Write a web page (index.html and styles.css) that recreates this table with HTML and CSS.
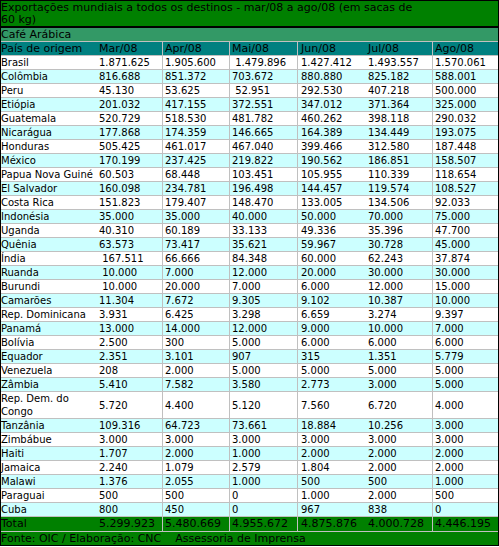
FILE: index.html
```html
<!DOCTYPE html>
<html lang="pt">
<head>
    <meta charset="UTF-8">
    <title>Exportações mundiais - Café Arábica</title>
    <link rel="stylesheet" href="styles.css">
</head>
<body>
    <table class="grid">
        <colgroup>
            <col class="c-pais">
            <col class="c-mar">
            <col class="c-apr">
            <col class="c-mai">
            <col class="c-jun">
            <col class="c-jul">
            <col class="c-ago">
        </colgroup>
        <tr class="title">
            <td colspan="7"><div class="title-text">Exportações mundiais a todos os destinos - mar/08 a ago/08 (em sacas de 60 kg)</div></td>
        </tr>
        <tr class="section">
            <td colspan="7">Café Arábica</td>
        </tr>
        <tr class="head">
            <td>País de origem</td><td>Mar/08</td><td>Apr/08</td><td>Mai/08</td><td>Jun/08</td><td>Jul/08</td><td>Ago/08</td>
        </tr>
        <tr><td>Brasil</td><td>1.871.625</td><td>1.905.600</td><td>&nbsp;1.479.896</td><td>1.427.412</td><td>1.493.557</td><td>1.570.061</td></tr>
        <tr class="alt"><td>Colômbia</td><td>816.688</td><td>851.372</td><td>703.672</td><td>880.880</td><td>825.182</td><td>588.001</td></tr>
        <tr><td>Peru</td><td>45.130</td><td>53.625</td><td>&nbsp;52.951</td><td>292.530</td><td>407.218</td><td>500.000</td></tr>
        <tr class="alt"><td>Etiópia</td><td>201.032</td><td>417.155</td><td>372.551</td><td>347.012</td><td>371.364</td><td>325.000</td></tr>
        <tr><td>Guatemala</td><td>520.729</td><td>518.530</td><td>481.782</td><td>460.262</td><td>398.118</td><td>290.032</td></tr>
        <tr class="alt"><td>Nicarágua</td><td>177.868</td><td>174.359</td><td>146.665</td><td>164.389</td><td>134.449</td><td>193.075</td></tr>
        <tr><td>Honduras</td><td>505.425</td><td>461.017</td><td>467.040</td><td>399.466</td><td>312.580</td><td>187.448</td></tr>
        <tr class="alt"><td>México</td><td>170.199</td><td>237.425</td><td>219.822</td><td>190.562</td><td>186.851</td><td>158.507</td></tr>
        <tr><td>Papua Nova Guiné</td><td>60.503</td><td>68.448</td><td>103.451</td><td>105.955</td><td>110.339</td><td>118.654</td></tr>
        <tr class="alt"><td>El Salvador</td><td>160.098</td><td>234.781</td><td>196.498</td><td>144.457</td><td>119.574</td><td>108.527</td></tr>
        <tr><td>Costa Rica</td><td>151.823</td><td>179.407</td><td>148.470</td><td>133.005</td><td>134.506</td><td>92.033</td></tr>
        <tr class="alt"><td>Indonésia</td><td>35.000</td><td>35.000</td><td>40.000</td><td>50.000</td><td>70.000</td><td>75.000</td></tr>
        <tr><td>Uganda</td><td>40.310</td><td>60.189</td><td>33.133</td><td>49.336</td><td>35.396</td><td>47.700</td></tr>
        <tr class="alt"><td>Quênia</td><td>63.573</td><td>73.417</td><td>35.621</td><td>59.967</td><td>30.728</td><td>45.000</td></tr>
        <tr><td>Índia</td><td>&nbsp;167.511</td><td>66.666</td><td>84.348</td><td>60.000</td><td>62.243</td><td>37.874</td></tr>
        <tr class="alt"><td>Ruanda</td><td>&nbsp;10.000</td><td>7.000</td><td>12.000</td><td>20.000</td><td>30.000</td><td>30.000</td></tr>
        <tr><td>Burundi</td><td>&nbsp;10.000</td><td>20.000</td><td>7.000</td><td>6.000</td><td>12.000</td><td>15.000</td></tr>
        <tr class="alt"><td>Camarões</td><td>11.304</td><td>7.672</td><td>9.305</td><td>9.102</td><td>10.387</td><td>10.000</td></tr>
        <tr><td>Rep. Dominicana</td><td>3.931</td><td>6.425</td><td>3.298</td><td>6.659</td><td>3.274</td><td>9.397</td></tr>
        <tr class="alt"><td>Panamá</td><td>13.000</td><td>14.000</td><td>12.000</td><td>9.000</td><td>10.000</td><td>7.000</td></tr>
        <tr><td>Bolívia</td><td>2.500</td><td>300</td><td>5.000</td><td>6.000</td><td>6.000</td><td>6.000</td></tr>
        <tr class="alt"><td>Equador</td><td>2.351</td><td>3.101</td><td>907</td><td>315</td><td>1.351</td><td>5.779</td></tr>
        <tr><td>Venezuela</td><td>208</td><td>2.000</td><td>5.000</td><td>5.000</td><td>5.000</td><td>5.000</td></tr>
        <tr class="alt"><td>Zâmbia</td><td>5.410</td><td>7.582</td><td>3.580</td><td>2.773</td><td>3.000</td><td>5.000</td></tr>
        <tr class="tall"><td>Rep. Dem. do<br>Congo</td><td>5.720</td><td>4.400</td><td>5.120</td><td>7.560</td><td>6.720</td><td>4.000</td></tr>
        <tr class="alt"><td>Tanzânia</td><td>109.316</td><td>64.723</td><td>73.661</td><td>18.884</td><td>10.256</td><td>3.000</td></tr>
        <tr><td>Zimbábue</td><td>3.000</td><td>3.000</td><td>3.000</td><td>3.000</td><td>3.000</td><td>3.000</td></tr>
        <tr class="alt"><td>Haiti</td><td>1.707</td><td>2.000</td><td>1.000</td><td>2.000</td><td>2.000</td><td>2.000</td></tr>
        <tr><td>Jamaica</td><td>2.240</td><td>1.079</td><td>2.579</td><td>1.804</td><td>2.000</td><td>2.000</td></tr>
        <tr class="alt"><td>Malawi</td><td>1.376</td><td>2.055</td><td>1.000</td><td>500</td><td>500</td><td>1.000</td></tr>
        <tr><td>Paraguai</td><td>500</td><td>500</td><td>0</td><td>1.000</td><td>2.000</td><td>500</td></tr>
        <tr class="alt"><td>Cuba</td><td>800</td><td>450</td><td>0</td><td>967</td><td>838</td><td>0</td></tr>
        <tr class="total">
            <td>Total</td><td>5.299.923</td><td>5.480.669</td><td>4.955.672</td><td>4.875.876</td><td>4.000.728</td><td>4.446.195</td>
        </tr>
        <tr class="source">
            <td colspan="7">Fonte: OIC / Elaboração: CNC &nbsp;&nbsp; Assessoria de Imprensa</td>
        </tr>
    </table>
</body>
</html>
```

FILE: styles.css
```css
body {
    margin: 0;
    background: #fff;
    font-family: "DejaVu Sans", Verdana, sans-serif;
    color: #000;
}

.grid {
    width: 499px;
    table-layout: fixed;
    border-collapse: separate;
    border-spacing: 0;
    border: 1px solid #000;
    font-size: 10px;
}

.c-pais { width: 96px; }
.c-mar { width: 65px; }
.c-apr { width: 67px; }
.c-mai { width: 68px; }
.c-jun { width: 68px; }
.c-jul { width: 67px; }
.c-ago { width: 66px; }

.grid td {
    height: 13px;
    line-height: 13px;
    padding: 0 0 0 2px;
    border-bottom: 1px solid #c0c0c0;
    white-space: nowrap;
    vertical-align: middle;
    overflow: hidden;
}

.grid td:first-child {
    padding-left: 0;
}

.grid tr > td:nth-child(3),
.grid tr > td:nth-child(4),
.grid tr > td:nth-child(7) {
    border-left: 1px solid #c0c0c0;
}

.grid tr > td:nth-child(5) {
    border-left: 1px solid #c0c0c0;
    padding-left: 3px;
}

.grid tr > td:nth-child(6) {
    padding-left: 3px;
}

.alt td {
    background: #ccffff;
}

.tall td {
    height: 26px;
}

.title td {
    background: #008000;
    height: 24px;
    line-height: 12px;
    padding: 1px 0 0 0;
    border-bottom: 2px solid #000;
    white-space: normal;
    font-size: 11px;
}

.title-text {
    width: 420px;
}

.section td {
    background: #339966;
    font-size: 11px;
}

.head td {
    background: #008080;
    font-size: 11px;
}

.total td {
    background: #008000;
    font-size: 11px;
    height: 14px;
    line-height: 14px;
}

.source td {
    background: #008000;
    font-size: 11px;
    border-bottom: none;
}
```
